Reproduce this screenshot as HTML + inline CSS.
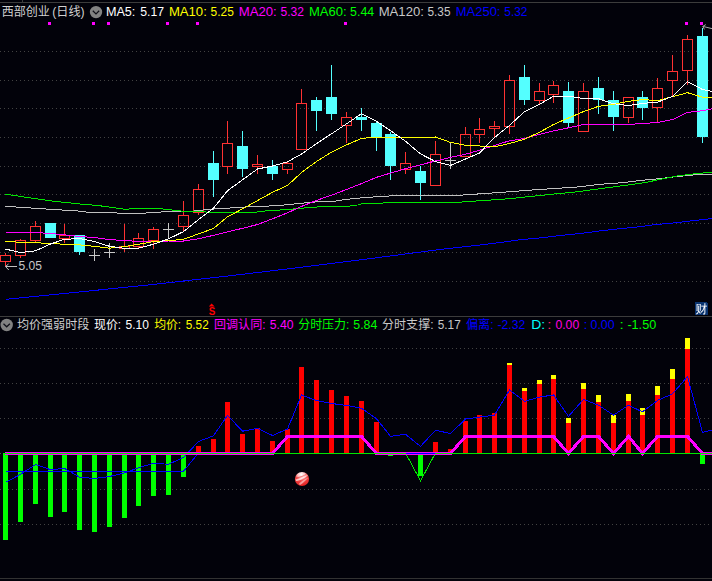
<!DOCTYPE html>
<html lang="zh-CN"><head><meta charset="utf-8"><title>西部创业(日线)</title>
<style>
html,body{margin:0;padding:0;background:#02020a;overflow:hidden}
svg{display:block}
text{font-family:"Liberation Sans", "Noto Sans CJK SC", sans-serif;font-size:12px}
.ce{shape-rendering:crispEdges}
.ln{fill:none;shape-rendering:crispEdges}
</style></head><body>
<svg width="712" height="581" viewBox="0 0 712 581">
<rect width="712" height="581" fill="#02020a"/>
<g class="ce" fill="#3c3c3c">
<rect x="0" y="2" width="712" height="1"/>
<rect x="22" y="0" width="1" height="2"/>
<rect x="0" y="316" width="712" height="1"/>
<rect x="0" y="578" width="712" height="1" fill="#323232"/>
</g>
<g stroke="#424242" stroke-width="1" stroke-dasharray="1 3" class="ce">
<line x1="0" y1="51.5" x2="712" y2="51.5"/>
<line x1="0" y1="80.5" x2="712" y2="80.5"/>
<line x1="0" y1="108.5" x2="712" y2="108.5"/>
<line x1="0" y1="137.5" x2="712" y2="137.5"/>
<line x1="0" y1="166.5" x2="712" y2="166.5"/>
<line x1="0" y1="194.5" x2="712" y2="194.5"/>
<line x1="0" y1="223.5" x2="712" y2="223.5"/>
<line x1="0" y1="252.5" x2="712" y2="252.5"/>
<line x1="0" y1="281.5" x2="712" y2="281.5"/>
<line x1="0" y1="348.5" x2="712" y2="348.5"/>
<line x1="0" y1="383.5" x2="712" y2="383.5"/>
<line x1="0" y1="418.5" x2="712" y2="418.5"/>
<line x1="0" y1="489.5" x2="712" y2="489.5"/>
<line x1="0" y1="524.5" x2="712" y2="524.5"/>
</g>
<g fill="#ff00ff" class="ce">
<rect x="48" y="22" width="3" height="3"/>
<rect x="92" y="22" width="3" height="3"/>
<rect x="107" y="22" width="3" height="3"/>
<rect x="166" y="22" width="3" height="3"/>
<rect x="196" y="22" width="3" height="3"/>
<rect x="344" y="22" width="3" height="3"/>
<rect x="685" y="22" width="3" height="3"/>
<rect x="700" y="22" width="3" height="3"/>
</g>
<g class="ce">
<rect x="5" y="253" width="1" height="2" fill="#ff3232"/>
<rect x="5" y="262" width="1" height="4" fill="#ff3232"/>
<rect x="0.5" y="255.5" width="10" height="6" fill="none" stroke="#ff3232" stroke-width="1"/>
<rect x="20" y="239" width="1" height="1" fill="#ff3232"/>
<rect x="20" y="256" width="1" height="2" fill="#ff3232"/>
<rect x="15.5" y="240.5" width="10" height="15" fill="none" stroke="#ff3232" stroke-width="1"/>
<rect x="35" y="221" width="1" height="5" fill="#ff3232"/>
<rect x="35" y="241" width="1" height="1" fill="#ff3232"/>
<rect x="30.5" y="226.5" width="10" height="14" fill="none" stroke="#ff3232" stroke-width="1"/>
<rect x="50" y="223" width="1" height="15" fill="#54ffff"/>
<rect x="45" y="223" width="11" height="15" fill="#54ffff"/>
<rect x="64" y="224" width="1" height="11" fill="#ff3232"/>
<rect x="64" y="239" width="1" height="4" fill="#ff3232"/>
<rect x="59.5" y="235.5" width="10" height="3" fill="none" stroke="#ff3232" stroke-width="1"/>
<rect x="79" y="235" width="1" height="20" fill="#54ffff"/>
<rect x="74" y="235" width="11" height="17" fill="#54ffff"/>
<rect x="94" y="249" width="1" height="12" fill="#c8c8c8"/>
<rect x="89" y="255" width="11" height="1" fill="#c8c8c8"/>
<rect x="109" y="243" width="1" height="15" fill="#c8c8c8"/>
<rect x="104" y="252" width="11" height="1" fill="#c8c8c8"/>
<rect x="124" y="224" width="1" height="22" fill="#ff3232"/>
<rect x="124" y="249" width="1" height="3" fill="#ff3232"/>
<rect x="119.5" y="246.5" width="10" height="2" fill="none" stroke="#ff3232" stroke-width="1"/>
<rect x="138" y="233" width="1" height="5" fill="#ff3232"/>
<rect x="138" y="247" width="1" height="1" fill="#ff3232"/>
<rect x="133.5" y="238.5" width="10" height="8" fill="none" stroke="#ff3232" stroke-width="1"/>
<rect x="153" y="227" width="1" height="2" fill="#ff3232"/>
<rect x="153" y="241" width="1" height="8" fill="#ff3232"/>
<rect x="148.5" y="229.5" width="10" height="11" fill="none" stroke="#ff3232" stroke-width="1"/>
<rect x="168" y="223" width="1" height="16" fill="#c8c8c8"/>
<rect x="163" y="229" width="11" height="1" fill="#c8c8c8"/>
<rect x="183" y="201" width="1" height="14" fill="#ff3232"/>
<rect x="183" y="227" width="1" height="4" fill="#ff3232"/>
<rect x="178.5" y="215.5" width="10" height="11" fill="none" stroke="#ff3232" stroke-width="1"/>
<rect x="198" y="184" width="1" height="5" fill="#ff3232"/>
<rect x="198" y="213" width="1" height="2" fill="#ff3232"/>
<rect x="193.5" y="189.5" width="10" height="23" fill="none" stroke="#ff3232" stroke-width="1"/>
<rect x="213" y="151" width="1" height="46" fill="#54ffff"/>
<rect x="208" y="163" width="11" height="17" fill="#54ffff"/>
<rect x="227" y="121" width="1" height="22" fill="#ff3232"/>
<rect x="227" y="167" width="1" height="7" fill="#ff3232"/>
<rect x="222.5" y="143.5" width="10" height="23" fill="none" stroke="#ff3232" stroke-width="1"/>
<rect x="242" y="131" width="1" height="46" fill="#54ffff"/>
<rect x="237" y="146" width="11" height="23" fill="#54ffff"/>
<rect x="257" y="155" width="1" height="9" fill="#ff3232"/>
<rect x="257" y="167" width="1" height="7" fill="#ff3232"/>
<rect x="252.5" y="164.5" width="10" height="2" fill="none" stroke="#ff3232" stroke-width="1"/>
<rect x="272" y="160" width="1" height="20" fill="#54ffff"/>
<rect x="267" y="166" width="11" height="8" fill="#54ffff"/>
<rect x="287" y="161" width="1" height="2" fill="#ff3232"/>
<rect x="287" y="170" width="1" height="4" fill="#ff3232"/>
<rect x="282.5" y="163.5" width="10" height="6" fill="none" stroke="#ff3232" stroke-width="1"/>
<rect x="301" y="89" width="1" height="14" fill="#ff3232"/>
<rect x="296.5" y="103.5" width="10" height="46" fill="none" stroke="#ff3232" stroke-width="1"/>
<rect x="316" y="97" width="1" height="34" fill="#54ffff"/>
<rect x="311" y="100" width="11" height="11" fill="#54ffff"/>
<rect x="331" y="65" width="1" height="55" fill="#54ffff"/>
<rect x="326" y="97" width="11" height="17" fill="#54ffff"/>
<rect x="346" y="112" width="1" height="5" fill="#ff3232"/>
<rect x="346" y="126" width="1" height="17" fill="#ff3232"/>
<rect x="341.5" y="117.5" width="10" height="8" fill="none" stroke="#ff3232" stroke-width="1"/>
<rect x="361" y="108" width="1" height="23" fill="#54ffff"/>
<rect x="356" y="117" width="11" height="3" fill="#54ffff"/>
<rect x="376" y="121" width="1" height="30" fill="#54ffff"/>
<rect x="371" y="123" width="11" height="14" fill="#54ffff"/>
<rect x="390" y="132" width="1" height="48" fill="#54ffff"/>
<rect x="385" y="134" width="11" height="32" fill="#54ffff"/>
<rect x="405" y="152" width="1" height="11" fill="#ff3232"/>
<rect x="405" y="170" width="1" height="4" fill="#ff3232"/>
<rect x="400.5" y="163.5" width="10" height="6" fill="none" stroke="#ff3232" stroke-width="1"/>
<rect x="420" y="166" width="1" height="34" fill="#54ffff"/>
<rect x="415" y="171" width="11" height="12" fill="#54ffff"/>
<rect x="435" y="141" width="1" height="13" fill="#ff3232"/>
<rect x="430.5" y="154.5" width="10" height="31" fill="none" stroke="#ff3232" stroke-width="1"/>
<rect x="450" y="143" width="1" height="26" fill="#c8c8c8"/>
<rect x="445" y="160" width="11" height="1" fill="#c8c8c8"/>
<rect x="465" y="127" width="1" height="7" fill="#ff3232"/>
<rect x="460.5" y="134.5" width="10" height="22" fill="none" stroke="#ff3232" stroke-width="1"/>
<rect x="479" y="118" width="1" height="11" fill="#ff3232"/>
<rect x="479" y="135" width="1" height="8" fill="#ff3232"/>
<rect x="474.5" y="129.5" width="10" height="5" fill="none" stroke="#ff3232" stroke-width="1"/>
<rect x="494" y="121" width="1" height="5" fill="#ff3232"/>
<rect x="494" y="129" width="1" height="8" fill="#ff3232"/>
<rect x="489.5" y="126.5" width="10" height="2" fill="none" stroke="#ff3232" stroke-width="1"/>
<rect x="509" y="75" width="1" height="5" fill="#ff3232"/>
<rect x="509" y="127" width="1" height="7" fill="#ff3232"/>
<rect x="504.5" y="80.5" width="10" height="46" fill="none" stroke="#ff3232" stroke-width="1"/>
<rect x="524" y="65" width="1" height="40" fill="#54ffff"/>
<rect x="519" y="77" width="11" height="23" fill="#54ffff"/>
<rect x="539" y="83" width="1" height="8" fill="#ff3232"/>
<rect x="539" y="101" width="1" height="4" fill="#ff3232"/>
<rect x="534.5" y="91.5" width="10" height="9" fill="none" stroke="#ff3232" stroke-width="1"/>
<rect x="553" y="81" width="1" height="4" fill="#ff3232"/>
<rect x="553" y="95" width="1" height="8" fill="#ff3232"/>
<rect x="548.5" y="85.5" width="10" height="9" fill="none" stroke="#ff3232" stroke-width="1"/>
<rect x="568" y="82" width="1" height="46" fill="#54ffff"/>
<rect x="563" y="91" width="11" height="32" fill="#54ffff"/>
<rect x="583" y="83" width="1" height="8" fill="#ff3232"/>
<rect x="578.5" y="91.5" width="10" height="40" fill="none" stroke="#ff3232" stroke-width="1"/>
<rect x="598" y="77" width="1" height="37" fill="#54ffff"/>
<rect x="593" y="88" width="11" height="12" fill="#54ffff"/>
<rect x="613" y="91" width="1" height="40" fill="#54ffff"/>
<rect x="608" y="100" width="11" height="17" fill="#54ffff"/>
<rect x="628" y="118" width="1" height="5" fill="#ff3232"/>
<rect x="623.5" y="97.5" width="10" height="20" fill="none" stroke="#ff3232" stroke-width="1"/>
<rect x="642" y="91" width="1" height="29" fill="#54ffff"/>
<rect x="637" y="97" width="11" height="11" fill="#54ffff"/>
<rect x="657" y="78" width="1" height="10" fill="#ff3232"/>
<rect x="657" y="108" width="1" height="14" fill="#ff3232"/>
<rect x="652.5" y="88.5" width="10" height="19" fill="none" stroke="#ff3232" stroke-width="1"/>
<rect x="672" y="55" width="1" height="16" fill="#ff3232"/>
<rect x="672" y="81" width="1" height="16" fill="#ff3232"/>
<rect x="667.5" y="71.5" width="10" height="9" fill="none" stroke="#ff3232" stroke-width="1"/>
<rect x="687" y="35" width="1" height="4" fill="#ff3232"/>
<rect x="687" y="71" width="1" height="14" fill="#ff3232"/>
<rect x="682.5" y="39.5" width="10" height="31" fill="none" stroke="#ff3232" stroke-width="1"/>
<rect x="702" y="28" width="1" height="115" fill="#54ffff"/>
<rect x="697" y="36" width="11" height="101" fill="#54ffff"/>
</g>
<polyline class="ln" points="5.5,299.4 150.0,284.8 240.0,274.6 300.0,267.4 370.0,258.6 440.0,249.5 458.0,247.5 476.0,245.5 491.0,243.6 507.0,241.6 521.0,239.6 543.0,237.7 558.0,235.7 572.0,234.4 587.0,232.6 602.5,230.6 621.0,228.6 640.0,226.7 654.6,224.7 676.0,222.7 692.0,220.8 712.0,218.5" stroke="#0000ff" stroke-width="1"/>
<polyline class="ln" points="5.5,206.3 50.0,209.3 85.0,211.4 87.0,212.4 116.0,212.4 118.0,213.3 145.0,213.3 147.0,212.4 160.0,212.4 162.0,211.4 191.0,211.4 198.0,210.6 206.0,209.6 220.0,208.6 235.0,207.7 249.0,206.7 262.0,206.4 281.0,205.3 298.0,203.6 309.0,202.5 324.0,201.3 335.0,201.2 340.0,200.3 350.0,199.0 358.0,198.2 369.0,197.3 383.0,196.2 413.0,195.3 458.0,195.3 472.0,194.4 486.0,193.4 501.0,192.4 517.0,191.2 531.0,190.1 546.0,189.1 561.0,188.1 576.0,187.1 588.0,185.8 596.0,184.8 606.0,183.8 621.0,182.8 632.0,181.5 640.0,180.5 650.6,179.5 661.5,178.5 669.0,177.5 676.0,176.6 685.0,175.8 695.0,174.8 712.0,174.0" stroke="#c0c0c0" stroke-width="1"/>
<polyline class="ln" points="5.5,194.2 50.6,200.9 84.0,204.4 97.0,205.4 106.0,206.6 113.0,207.6 121.0,208.6 126.0,209.5 131.0,208.6 161.0,208.6 165.0,209.5 171.0,209.5 173.0,210.4 180.0,210.5 182.0,211.4 204.0,211.5 207.0,212.4 255.0,212.2 265.0,211.0 282.0,209.9 297.0,208.7 311.0,207.4 326.0,206.4 349.0,206.3 352.0,205.1 358.0,205.0 361.0,203.9 381.0,203.8 384.0,202.5 450.0,202.4 458.0,202.3 472.0,201.3 487.0,200.3 502.0,199.3 513.0,198.3 521.0,197.4 531.0,196.4 542.0,195.4 550.0,194.4 561.0,193.4 572.0,192.4 580.0,191.5 587.0,190.4 594.6,189.4 602.5,188.4 610.0,187.4 617.0,186.4 625.0,185.4 632.0,184.4 639.0,183.4 646.0,182.5 650.6,181.5 654.6,180.5 676.0,176.2 685.0,175.0 696.0,173.6 707.7,172.6 712.0,172.2" stroke="#00e600" stroke-width="1"/>
<polyline class="ln" points="5.5,232.4 20.5,232.4 35.5,232.5 50.5,233.5 64.5,234.8 79.5,236.5 94.5,237.5 109.5,239.6 124.5,240.5 138.5,241.4 153.5,241.4 168.5,241.0 183.5,241.0 198.5,238.8 213.5,235.3 227.5,231.8 242.5,228.3 257.5,224.5 272.5,218.8 287.5,212.8 301.5,206.4 316.5,200.4 331.5,195.2 346.5,189.5 361.5,183.6 376.5,177.3 390.5,173.1 405.5,168.7 420.5,164.8 435.5,161.0 450.5,157.4 465.5,154.2 479.5,150.2 494.5,145.4 509.5,140.8 524.5,138.5 539.5,134.3 553.5,130.9 568.5,127.8 583.5,124.5 598.5,124.4 613.5,124.4 628.5,124.4 642.5,123.5 657.5,122.5 672.5,119.6 687.5,112.4 702.5,110.7 717.5,107.7" stroke="#ff00ff" stroke-width="1"/>
<polyline class="ln" points="5.5,241.5 20.5,242.2 35.5,242.5 50.5,243.8 64.5,244.1 79.5,244.9 94.5,246.3 109.5,248.2 124.5,246.6 138.5,244.3 153.5,241.6 168.5,240.7 183.5,239.3 198.5,233.9 213.5,228.5 227.5,216.8 242.5,208.9 257.5,200.6 272.5,192.3 287.5,185.5 301.5,172.5 316.5,161.5 331.5,152.2 346.5,144.9 361.5,138.4 376.5,137.2 390.5,137.5 405.5,137.8 420.5,138.0 435.5,137.0 450.5,142.4 465.5,145.2 479.5,146.0 494.5,146.9 509.5,143.5 524.5,139.2 539.5,132.3 553.5,124.5 568.5,118.0 583.5,111.6 598.5,106.3 613.5,104.2 628.5,101.3 642.5,99.6 657.5,100.6 672.5,96.7 687.5,92.7 702.5,97.2 717.5,98.5" stroke="#ffff00" stroke-width="1"/>
<polyline class="ln" points="5.5,249.1 20.5,252.5 35.5,250.8 50.5,244.0 64.5,239.3 79.5,238.6 94.5,241.6 109.5,246.3 124.5,248.3 138.5,248.2 153.5,244.2 168.5,238.9 183.5,231.6 198.5,219.6 213.5,208.2 227.5,190.8 242.5,179.8 257.5,169.0 272.5,166.0 287.5,161.8 301.5,154.0 316.5,143.7 331.5,133.8 346.5,123.9 361.5,113.7 376.5,121.3 390.5,130.6 405.5,141.3 420.5,153.9 435.5,161.6 450.5,165.4 465.5,159.0 479.5,153.0 494.5,137.5 509.5,125.4 524.5,111.6 539.5,104.4 553.5,96.3 568.5,96.1 583.5,98.5 598.5,98.7 613.5,103.7 628.5,105.6 642.5,103.4 657.5,102.2 672.5,96.3 687.5,81.6 702.5,89.5 717.5,92.5" stroke="#ffffff" stroke-width="1"/>
<g stroke="#c0c0c0" stroke-width="1" fill="none">
<path d="M17 266.5H5.5M8.5 264L5.5 266.5L8.8 270"/>
<path d="M712 28.6L702.8 26.4M705.8 24.6L702.8 26.4L704.4 29.4" stroke="#a8a8a8"/>
</g>
<text x="18.5" y="270" fill="#c8c8c8" textLength="23.5" lengthAdjust="spacingAndGlyphs">5.05</text>
<path d="M211.6 303.6L214.6 306.6H208.8Z" fill="#ff0000"/>
<text x="208.8" y="315" fill="#ff0000" style="font-weight:bold;font-size:10px" textLength="6.5" lengthAdjust="spacingAndGlyphs">S</text>
<path d="M695 302H706L708 304V315H695Z" fill="#0a3470" class="ce"/>
<text x="695.5" y="313" fill="#ffffff" style="font-family:'Liberation Sans','WenQuanYi Zen Hei','Noto Sans CJK SC',sans-serif">财</text>
<circle cx="96.0" cy="12.1" r="6.2" fill="#828282"/><path d="M92.8 10.8l3.2 3.1l3.2 -3.1" fill="none" stroke="#101018" stroke-width="1.2"/>
<circle cx="6.7" cy="325.0" r="6.2" fill="#828282"/><path d="M3.5 323.7l3.2 3.1l3.2 -3.1" fill="none" stroke="#101018" stroke-width="1.2"/>
<text x="1.8" y="15.8" fill="#d0d0d0" textLength="48.1" lengthAdjust="spacingAndGlyphs">西部创业</text>
<text x="52.2" y="15.8" fill="#d0d0d0" textLength="32.4" lengthAdjust="spacingAndGlyphs">(日线)</text>
<text x="105.9" y="15.8" fill="#ffffff" textLength="29.5" lengthAdjust="spacingAndGlyphs">MA5:</text>
<text x="140.2" y="15.8" fill="#ffffff" textLength="23.8" lengthAdjust="spacingAndGlyphs">5.17</text>
<text x="168.9" y="15.8" fill="#ffff00" textLength="37.9" lengthAdjust="spacingAndGlyphs">MA10:</text>
<text x="210.6" y="15.8" fill="#ffff00" textLength="23.2" lengthAdjust="spacingAndGlyphs">5.25</text>
<text x="238.7" y="15.8" fill="#ff00ff" textLength="38.1" lengthAdjust="spacingAndGlyphs">MA20:</text>
<text x="280.6" y="15.8" fill="#ff00ff" textLength="23.4" lengthAdjust="spacingAndGlyphs">5.32</text>
<text x="309.0" y="15.8" fill="#00ff00" textLength="37.7" lengthAdjust="spacingAndGlyphs">MA60:</text>
<text x="350.1" y="15.8" fill="#00ff00" textLength="24.0" lengthAdjust="spacingAndGlyphs">5.44</text>
<text x="378.7" y="15.8" fill="#c8c8c8" textLength="45.2" lengthAdjust="spacingAndGlyphs">MA120:</text>
<text x="427.5" y="15.8" fill="#c8c8c8" textLength="23.0" lengthAdjust="spacingAndGlyphs">5.35</text>
<text x="455.7" y="15.8" fill="#0000ff" textLength="44.8" lengthAdjust="spacingAndGlyphs">MA250:</text>
<text x="504.3" y="15.8" fill="#0000ff" textLength="23.2" lengthAdjust="spacingAndGlyphs">5.32</text>
<text x="16.9" y="329.2" fill="#d0d0d0" textLength="72.4" lengthAdjust="spacingAndGlyphs">均价强弱时段</text>
<text x="94.0" y="329.2" fill="#ffffff" textLength="27.1" lengthAdjust="spacingAndGlyphs">现价:</text>
<text x="125.6" y="329.2" fill="#ffffff" textLength="23.4" lengthAdjust="spacingAndGlyphs">5.10</text>
<text x="154.2" y="329.2" fill="#ffff00" textLength="26.9" lengthAdjust="spacingAndGlyphs">均价:</text>
<text x="185.8" y="329.2" fill="#ffff00" textLength="22.9" lengthAdjust="spacingAndGlyphs">5.52</text>
<text x="214.1" y="329.2" fill="#ff00ff" textLength="51.4" lengthAdjust="spacingAndGlyphs">回调认同:</text>
<text x="269.8" y="329.2" fill="#ff00ff" textLength="23.8" lengthAdjust="spacingAndGlyphs">5.40</text>
<text x="298.2" y="329.2" fill="#00ff00" textLength="51.2" lengthAdjust="spacingAndGlyphs">分时压力:</text>
<text x="353.3" y="329.2" fill="#00ff00" textLength="24.0" lengthAdjust="spacingAndGlyphs">5.84</text>
<text x="382.1" y="329.2" fill="#c8c8c8" textLength="51.4" lengthAdjust="spacingAndGlyphs">分时支撑:</text>
<text x="437.8" y="329.2" fill="#c8c8c8" textLength="22.9" lengthAdjust="spacingAndGlyphs">5.17</text>
<text x="465.9" y="329.2" fill="#0000ff" textLength="27.7" lengthAdjust="spacingAndGlyphs">偏离:</text>
<text x="497.5" y="329.2" fill="#0000ff" textLength="27.8" lengthAdjust="spacingAndGlyphs">-2.32</text>
<text x="531.2" y="329.2" fill="#00ffff" textLength="13.9" lengthAdjust="spacingAndGlyphs">D:</text>
<text x="547.2" y="329.2" fill="#ff2060" textLength="4.2" lengthAdjust="spacingAndGlyphs">:</text>
<text x="555.4" y="329.2" fill="#ff00e0" textLength="23.8" lengthAdjust="spacingAndGlyphs">0.00</text>
<text x="583.5" y="329.2" fill="#0000ff" textLength="4.1" lengthAdjust="spacingAndGlyphs">:</text>
<text x="590.5" y="329.2" fill="#0000ff" textLength="24.2" lengthAdjust="spacingAndGlyphs">0.00</text>
<text x="619.6" y="329.2" fill="#00ff00" textLength="4.2" lengthAdjust="spacingAndGlyphs">:</text>
<text x="627.4" y="329.2" fill="#00ff00" textLength="28.8" lengthAdjust="spacingAndGlyphs">-1.50</text>
<g class="ce">
<rect x="3" y="453" width="5" height="87" fill="#00ff00"/>
<rect x="18" y="453" width="5" height="69" fill="#00ff00"/>
<rect x="33" y="453" width="5" height="51" fill="#00ff00"/>
<rect x="48" y="453" width="5" height="64" fill="#00ff00"/>
<rect x="62" y="453" width="5" height="59" fill="#00ff00"/>
<rect x="77" y="453" width="5" height="77" fill="#00ff00"/>
<rect x="92" y="453" width="5" height="79" fill="#00ff00"/>
<rect x="107" y="453" width="5" height="74" fill="#00ff00"/>
<rect x="122" y="453" width="5" height="65" fill="#00ff00"/>
<rect x="136" y="453" width="5" height="53" fill="#00ff00"/>
<rect x="151" y="453" width="5" height="43" fill="#00ff00"/>
<rect x="166" y="453" width="5" height="42" fill="#00ff00"/>
<rect x="181" y="453" width="5" height="24" fill="#00ff00"/>
<rect x="196" y="446" width="5" height="7" fill="#ff0000"/>
<rect x="211" y="439" width="5" height="14" fill="#ff0000"/>
<rect x="225" y="402" width="5" height="51" fill="#ff0000"/>
<rect x="240" y="434" width="5" height="19" fill="#ff0000"/>
<rect x="255" y="428" width="5" height="25" fill="#ff0000"/>
<rect x="270" y="441" width="5" height="12" fill="#ff0000"/>
<rect x="285" y="429" width="5" height="24" fill="#ff0000"/>
<rect x="299" y="367" width="5" height="86" fill="#ff0000"/>
<rect x="314" y="380" width="5" height="73" fill="#ff0000"/>
<rect x="329" y="390" width="5" height="63" fill="#ff0000"/>
<rect x="344" y="396" width="5" height="57" fill="#ff0000"/>
<rect x="359" y="401" width="5" height="52" fill="#ff0000"/>
<rect x="374" y="422" width="5" height="31" fill="#ff0000"/>
<rect x="388" y="453" width="5" height="3" fill="#00ff00"/>
<rect x="418" y="453" width="5" height="23" fill="#00ff00"/>
<rect x="433" y="442" width="5" height="11" fill="#ff0000"/>
<rect x="448" y="449" width="5" height="4" fill="#ff0000"/>
<rect x="463" y="421" width="5" height="32" fill="#ff0000"/>
<rect x="477" y="415" width="5" height="38" fill="#ff0000"/>
<rect x="492" y="413" width="5" height="40" fill="#ff0000"/>
<rect x="507" y="365" width="5" height="88" fill="#ff0000"/>
<rect x="507" y="363" width="5" height="2" fill="#ffff00"/>
<rect x="522" y="391" width="5" height="62" fill="#ff0000"/>
<rect x="522" y="388" width="5" height="3" fill="#ffff00"/>
<rect x="537" y="384" width="5" height="69" fill="#ff0000"/>
<rect x="537" y="380" width="5" height="4" fill="#ffff00"/>
<rect x="551" y="379" width="5" height="74" fill="#ff0000"/>
<rect x="551" y="375" width="5" height="4" fill="#ffff00"/>
<rect x="566" y="423" width="5" height="30" fill="#ff0000"/>
<rect x="566" y="418" width="5" height="5" fill="#ffff00"/>
<rect x="581" y="389" width="5" height="64" fill="#ff0000"/>
<rect x="581" y="383" width="5" height="6" fill="#ffff00"/>
<rect x="596" y="402" width="5" height="51" fill="#ff0000"/>
<rect x="596" y="395" width="5" height="7" fill="#ffff00"/>
<rect x="611" y="423" width="5" height="30" fill="#ff0000"/>
<rect x="611" y="415" width="5" height="8" fill="#ffff00"/>
<rect x="626" y="401" width="5" height="52" fill="#ff0000"/>
<rect x="626" y="394" width="5" height="7" fill="#ffff00"/>
<rect x="640" y="415" width="5" height="38" fill="#ff0000"/>
<rect x="640" y="408" width="5" height="7" fill="#ffff00"/>
<rect x="655" y="395" width="5" height="58" fill="#ff0000"/>
<rect x="655" y="386" width="5" height="9" fill="#ffff00"/>
<rect x="670" y="379" width="5" height="74" fill="#ff0000"/>
<rect x="670" y="369" width="5" height="10" fill="#ffff00"/>
<rect x="685" y="349" width="5" height="104" fill="#ff0000"/>
<rect x="685" y="338" width="5" height="11" fill="#ffff00"/>
<rect x="700" y="453" width="5" height="11" fill="#00ff00"/>
</g>
<polyline class="ln" points="405.5,453.0 420.5,480.8 435.5,453.0" stroke="#00e600" stroke-width="1"/>
<polyline class="ln" points="5.5,471.2 183.5,471.2 198.5,453.0" stroke="#0000ff" stroke-width="1"/>
<polyline class="ln" points="5.5,482.3 20.5,474.4 35.5,464.5 50.5,469.7 64.5,468.4 79.5,477.1 94.5,478.5 109.5,476.5 124.5,472.9 138.5,467.8 153.5,463.2 168.5,464.3 183.5,457.4 198.5,441.5 213.5,435.8 227.5,415.3 242.5,431.2 257.5,428.3 272.5,435.5 287.5,429.0 301.5,395.0 316.5,400.6 331.5,403.5 346.5,405.4 361.5,408.3 376.5,418.7 390.5,436.3 405.5,434.3 420.5,446.4 435.5,430.2 450.5,433.6 465.5,419.0 479.5,417.1 494.5,415.2 509.5,389.9 524.5,401.4 539.5,397.1 553.5,394.9 568.5,416.4 583.5,399.4 598.5,405.2 613.5,415.1 628.5,405.2 642.5,411.9 657.5,400.4 672.5,393.9 687.5,376.5 702.5,432.4 717.5,428.5" stroke="#0000ff" stroke-width="1"/>
<polyline class="ln" points="4.5,453.5 20.5,453.5 35.5,453.5 50.5,453.5 64.5,453.5 79.5,453.5 94.5,453.5 109.5,453.5 124.5,453.5 138.5,453.5 153.5,453.5 168.5,453.5 183.5,453.5 198.5,453.5 213.5,453.5 227.5,453.5 242.5,453.5 257.5,453.5 272.5,453.5 287.5,436.4 301.5,436.4 316.5,436.4 331.5,436.4 346.5,436.4 361.5,436.4 376.5,453.5 390.5,453.5 405.5,453.5 420.5,453.5 435.5,453.5 450.5,453.5 465.5,436.4 479.5,436.4 494.5,436.4 509.5,436.4 524.5,436.4 539.5,436.4 553.5,436.4 568.5,453.5 583.5,436.4 598.5,436.4 613.5,453.5 628.5,436.4 642.5,453.5 657.5,436.4 672.5,436.4 687.5,436.4 702.5,453.5 717.5,453.5" stroke="#ff00ff" stroke-width="3" stroke-linejoin="miter"/>
<rect x="4" y="453" width="708" height="1" fill="#00e600" class="ce"/>
<rect x="406" y="453" width="29" height="1" fill="#0000ff" class="ce"/>
<rect x="0" y="453" width="1" height="1" fill="#505050" class="ce"/>
<defs><radialGradient id="rb" cx="0.45" cy="0.18" r="0.8"><stop offset="0" stop-color="#ffffff"/><stop offset="0.3" stop-color="#ffc4c4"/><stop offset="0.55" stop-color="#f44a4a"/><stop offset="1" stop-color="#e22020"/></radialGradient></defs>
<clipPath id="bc"><circle cx="302" cy="479" r="7.1"/></clipPath>
<circle cx="302" cy="479" r="7.1" fill="url(#rb)"/>
<g clip-path="url(#bc)">
<path d="M295.6 479.6C300 478.6 305 476.6 308.6 474.2C306 477.6 300.5 480.2 296 481Z" fill="#ffffff" opacity="0.7"/>
<path d="M298.6 484C301.5 481.4 305 478.8 308.4 477.6C306 480.4 303 483.2 300.2 485Z" fill="#ffffff" opacity="0.5"/>
<path d="M296 477.4C300 476.8 304 475.4 307.4 473.2C304 476.6 300 478 296 478.4Z" fill="#e83030" opacity="0.55"/>
</g>
</svg></body></html>
